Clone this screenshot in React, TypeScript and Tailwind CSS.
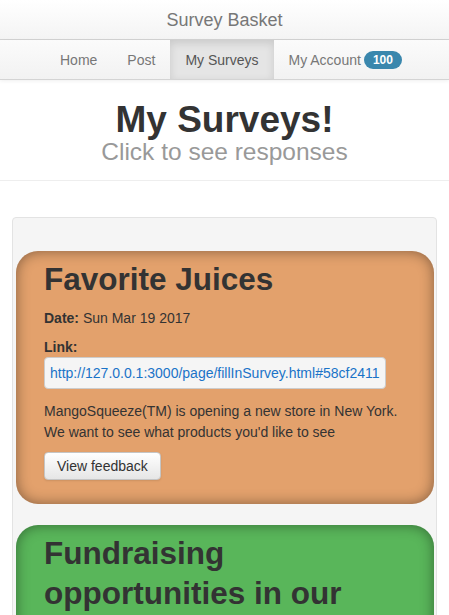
const surveys = [
  {
    title: "Favorite Juices",
    date: "Sun Mar 19 2017",
    link: "http://127.0.0.1:3000/page/fillInSurvey.html#58cf2411",
    description:
      "MangoSqueeze(TM) is opening a new store in New York. We want to see what products you'd like to see",
    color: "bg-[#e3a16c]",
  },
  {
    title: "Fundraising opportunities in our community",
    date: "Sun Mar 19 2017",
    link: "http://127.0.0.1:3000/page/fillInSurvey.html#58cf2412",
    description: "Help us decide which events to hold this year.",
    color: "bg-[#59b65a]",
  },
];

const navItems = ["Home", "Post", "My Surveys", "My Account"];

const SurveyCard = ({ survey }: { survey: (typeof surveys)[number] }) => (
  <div
    className={`${survey.color} rounded-[22px] pt-[8px] pb-[24px] pl-[28px] pr-[28px] shadow-[inset_0_0_14px_rgba(0,0,0,0.42)]`}
  >
    <h2 className="text-[31.5px] leading-[40px] font-bold text-[#333] mb-[9px]">
      {survey.title}
    </h2>
    <p className="text-sm leading-5 text-[#333] mb-[9px]">
      <b>Date:</b> {survey.date}
    </p>
    <div className="text-sm leading-5 font-bold text-[#333]">Link:</div>
    <div className="w-[342px] h-8 bg-[#f5f5f5] border border-[#ccc] rounded px-[5px] flex items-center overflow-hidden whitespace-nowrap">
      <span className="text-sm text-[#1a73c8]">{survey.link}</span>
    </div>
    <p className="text-sm leading-[21px] text-[#333] mt-[12px] mb-[9px]">
      {survey.description}
    </p>
    <button className="h-7 px-3 text-sm text-[#333] rounded border border-[#c5c5c5] bg-gradient-to-b from-white to-[#e6e6e6] shadow-[0_1px_2px_rgba(0,0,0,0.1)]">
      View feedback
    </button>
  </div>
);

export default function App() {
  return (
    <div className="min-h-screen bg-white font-['Liberation_Sans',Arial,sans-serif]">
      <div className="h-10 flex items-center justify-center bg-gradient-to-b from-white to-[#f4f4f4] border-b border-[#d4d4d4]">
        <span className="text-lg text-[#777]">Survey Basket</span>
      </div>
      <nav className="h-10 flex pl-[45px] bg-gradient-to-b from-[#fbfbfb] to-[#f2f2f2] border-b border-[#d4d4d4] shadow-[0_1px_4px_rgba(0,0,0,0.065)]">
        {navItems.map((item) => {
          const active = item === "My Surveys";
          return (
            <a
              key={item}
              className={`h-full flex items-center px-[15px] text-sm ${
                active
                  ? "bg-[#e5e5e5] text-[#555] shadow-[inset_0_3px_8px_rgba(0,0,0,0.125)]"
                  : "text-[#777]"
              }`}
            >
              {item}
              {item === "My Account" && (
                <span className="ml-[3px] h-[18px] px-[9px] rounded-full bg-[#3a87ad] text-white text-xs font-bold flex items-center">
                  100
                </span>
              )}
            </a>
          );
        })}
      </nav>
      <header className="pt-5 pb-4 border-b border-[#eee] text-center">
        <h1 className="text-[37px] leading-10 font-bold text-[#333]">My Surveys!</h1>
        <div className="text-[24.5px] leading-6 text-[#999]">Click to see responses</div>
      </header>
      <div className="mt-9 mx-3 bg-[#f5f5f5] border border-[#e3e3e3] rounded pt-[33px] pl-[3px] pr-[2px] pb-5 flex flex-col gap-[21px]">
        {surveys.map((s) => (
          <SurveyCard key={s.title} survey={s} />
        ))}
      </div>
    </div>
  );
}
